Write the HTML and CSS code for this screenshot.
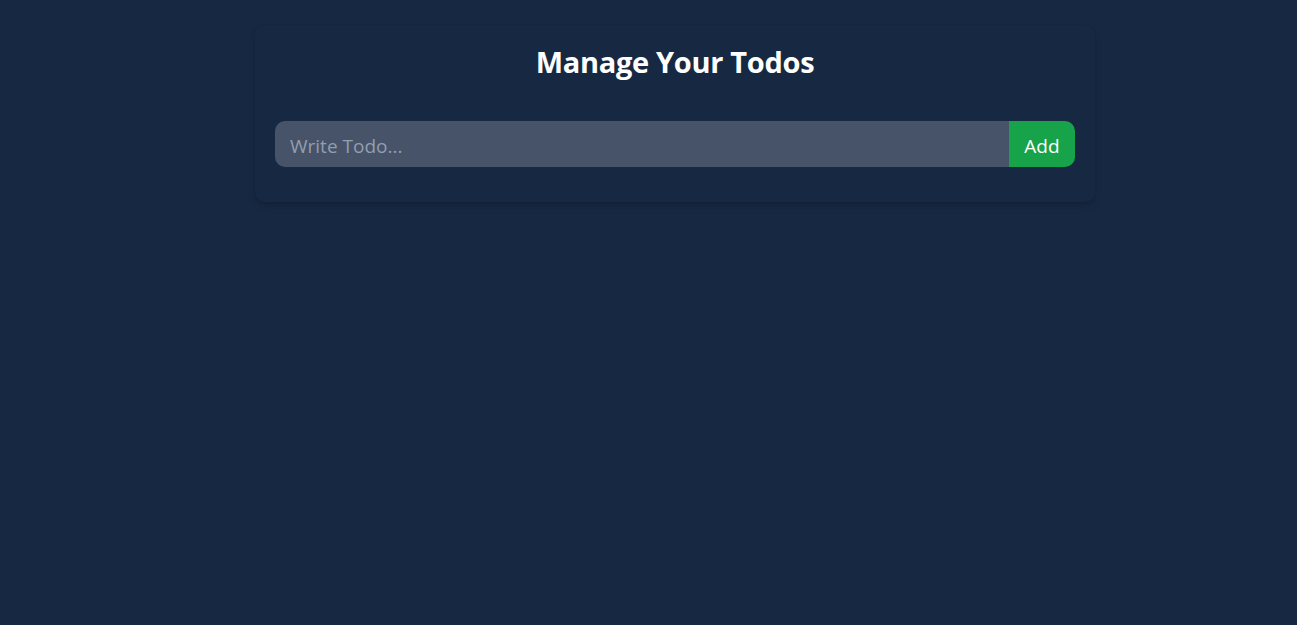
FILE: index.html
```html
<!DOCTYPE html>
<html lang="en">
<head>
<meta charset="utf-8">
<title>Todo</title>
<link rel="stylesheet" href="styles.css">
</head>
<body>
<main class="page">
  <section class="card">
    <h1 class="title">Manage Your Todos</h1>
    <form class="todo-form" onsubmit="return false">
      <input class="todo-input" type="text" placeholder="Write Todo...">
      <button class="todo-add" type="submit">Add</button>
    </form>
  </section>
</main>
</body>
</html>
```
FILE: styles.css
```css
html, body {
  margin: 0;
  padding: 0;
  background: #172842;
  min-height: 100%;
}
body {
  font-family: "Open Sans", "Noto Sans", "Liberation Sans", sans-serif;
  color: #ffffff;
}
.page {
  padding-top: 25px;
  min-height: 600px;
}
.card {
  box-sizing: border-box;
  width: 840px;
  margin-left: 255px;
  padding: 15px 20px 35px;
  border-radius: 10px;
  background: #172842;
  box-shadow: 0 5px 8px -1px rgba(0,0,0,0.12), 0 2px 5px -2px rgba(0,0,0,0.12);
}
.title {
  margin: 2px 0 39px;
  font-size: 29px;
  line-height: 40px;
  font-weight: 700;
  text-align: center;
  letter-spacing: -0.3px;
}
.todo-form {
  display: flex;
  height: 46px;
  margin: 0;
}
.todo-input {
  flex: 1;
  min-width: 0;
  box-sizing: border-box;
  height: 46px;
  border: none;
  outline: none;
  margin: 0;
  padding: 3px 15px 0;
  border-radius: 10px 0 0 10px;
  background: #465369;
  color: #ffffff;
  font-family: inherit;
  font-size: 19px;
}
.todo-input::placeholder {
  color: #939eae;
}
.todo-add {
  box-sizing: border-box;
  width: 66px;
  height: 46px;
  border: none;
  margin: 0;
  padding: 3px 15px 0;
  border-radius: 0 10px 10px 0;
  background: #16a34a;
  color: #ffffff;
  font-family: inherit;
  font-size: 19px;
  cursor: pointer;
}
```
